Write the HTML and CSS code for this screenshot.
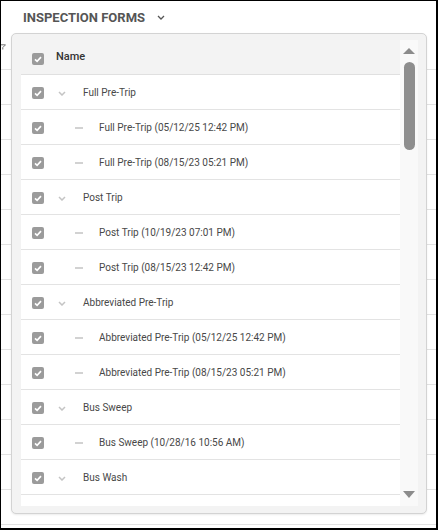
FILE: index.html
```html
<!DOCTYPE html>
<html>
<head>
<meta charset="utf-8">
<link rel="stylesheet" href="styles.css">
</head>
<body>
<div class="frame">
  <div class="title">
    <span class="title-text">INSPECTION FORMS</span>
    <svg class="title-chev" width="8" height="5" viewBox="0 0 8 5"><path d="M1 1 L4 4 L7 1" fill="none" stroke="#555" stroke-width="1.3"/></svg>
  </div>
  <div class="bg-head">
    <svg class="funnel" width="8" height="6" viewBox="0 0 8 6"><path d="M0.5 0.8 H7.5 L4.8 3.5 V5.5" fill="none" stroke="#777" stroke-width="1"/></svg>
  </div>

  <div class="panel">
    <div class="list">
      <div class="head">
        <svg class="cb cb-head" width="12" height="12" viewBox="0 0 12 12"><rect width="12" height="12" rx="2" fill="#9b9b9b"/><path d="M3 6.3 L5.1 8.3 L9 4.2" fill="none" stroke="#fff" stroke-width="1.7"/></svg>
        <span class="head-text">Name</span>
      </div>

      <div class="row">
        <svg class="cb" width="12" height="12" viewBox="0 0 12 12"><rect width="12" height="12" rx="2" fill="#9b9b9b"/><path d="M3 6.3 L5.1 8.3 L9 4.2" fill="none" stroke="#fff" stroke-width="1.7"/></svg>
        <svg class="chev" width="8" height="5" viewBox="0 0 8 5"><path d="M1 1 L4 4 L7 1" fill="none" stroke="#c4c4c4" stroke-width="1.5"/></svg>
        <span class="label">Full Pre-Trip</span>
      </div>
      <div class="row">
        <svg class="cb" width="12" height="12" viewBox="0 0 12 12"><rect width="12" height="12" rx="2" fill="#9b9b9b"/><path d="M3 6.3 L5.1 8.3 L9 4.2" fill="none" stroke="#fff" stroke-width="1.7"/></svg>
        <span class="dash"></span>
        <span class="label">Full Pre-Trip (05/12/25 12:42 PM)</span>
      </div>
      <div class="row">
        <svg class="cb" width="12" height="12" viewBox="0 0 12 12"><rect width="12" height="12" rx="2" fill="#9b9b9b"/><path d="M3 6.3 L5.1 8.3 L9 4.2" fill="none" stroke="#fff" stroke-width="1.7"/></svg>
        <span class="dash"></span>
        <span class="label">Full Pre-Trip (08/15/23 05:21 PM)</span>
      </div>
      <div class="row">
        <svg class="cb" width="12" height="12" viewBox="0 0 12 12"><rect width="12" height="12" rx="2" fill="#9b9b9b"/><path d="M3 6.3 L5.1 8.3 L9 4.2" fill="none" stroke="#fff" stroke-width="1.7"/></svg>
        <svg class="chev" width="8" height="5" viewBox="0 0 8 5"><path d="M1 1 L4 4 L7 1" fill="none" stroke="#c4c4c4" stroke-width="1.5"/></svg>
        <span class="label">Post Trip</span>
      </div>
      <div class="row">
        <svg class="cb" width="12" height="12" viewBox="0 0 12 12"><rect width="12" height="12" rx="2" fill="#9b9b9b"/><path d="M3 6.3 L5.1 8.3 L9 4.2" fill="none" stroke="#fff" stroke-width="1.7"/></svg>
        <span class="dash"></span>
        <span class="label">Post Trip (10/19/23 07:01 PM)</span>
      </div>
      <div class="row">
        <svg class="cb" width="12" height="12" viewBox="0 0 12 12"><rect width="12" height="12" rx="2" fill="#9b9b9b"/><path d="M3 6.3 L5.1 8.3 L9 4.2" fill="none" stroke="#fff" stroke-width="1.7"/></svg>
        <span class="dash"></span>
        <span class="label">Post Trip (08/15/23 12:42 PM)</span>
      </div>
      <div class="row">
        <svg class="cb" width="12" height="12" viewBox="0 0 12 12"><rect width="12" height="12" rx="2" fill="#9b9b9b"/><path d="M3 6.3 L5.1 8.3 L9 4.2" fill="none" stroke="#fff" stroke-width="1.7"/></svg>
        <svg class="chev" width="8" height="5" viewBox="0 0 8 5"><path d="M1 1 L4 4 L7 1" fill="none" stroke="#c4c4c4" stroke-width="1.5"/></svg>
        <span class="label">Abbreviated Pre-Trip</span>
      </div>
      <div class="row">
        <svg class="cb" width="12" height="12" viewBox="0 0 12 12"><rect width="12" height="12" rx="2" fill="#9b9b9b"/><path d="M3 6.3 L5.1 8.3 L9 4.2" fill="none" stroke="#fff" stroke-width="1.7"/></svg>
        <span class="dash"></span>
        <span class="label">Abbreviated Pre-Trip (05/12/25 12:42 PM)</span>
      </div>
      <div class="row">
        <svg class="cb" width="12" height="12" viewBox="0 0 12 12"><rect width="12" height="12" rx="2" fill="#9b9b9b"/><path d="M3 6.3 L5.1 8.3 L9 4.2" fill="none" stroke="#fff" stroke-width="1.7"/></svg>
        <span class="dash"></span>
        <span class="label">Abbreviated Pre-Trip (08/15/23 05:21 PM)</span>
      </div>
      <div class="row">
        <svg class="cb" width="12" height="12" viewBox="0 0 12 12"><rect width="12" height="12" rx="2" fill="#9b9b9b"/><path d="M3 6.3 L5.1 8.3 L9 4.2" fill="none" stroke="#fff" stroke-width="1.7"/></svg>
        <svg class="chev" width="8" height="5" viewBox="0 0 8 5"><path d="M1 1 L4 4 L7 1" fill="none" stroke="#c4c4c4" stroke-width="1.5"/></svg>
        <span class="label">Bus Sweep</span>
      </div>
      <div class="row">
        <svg class="cb" width="12" height="12" viewBox="0 0 12 12"><rect width="12" height="12" rx="2" fill="#9b9b9b"/><path d="M3 6.3 L5.1 8.3 L9 4.2" fill="none" stroke="#fff" stroke-width="1.7"/></svg>
        <span class="dash"></span>
        <span class="label">Bus Sweep (10/28/16 10:56 AM)</span>
      </div>
      <div class="row">
        <svg class="cb" width="12" height="12" viewBox="0 0 12 12"><rect width="12" height="12" rx="2" fill="#9b9b9b"/><path d="M3 6.3 L5.1 8.3 L9 4.2" fill="none" stroke="#fff" stroke-width="1.7"/></svg>
        <svg class="chev" width="8" height="5" viewBox="0 0 8 5"><path d="M1 1 L4 4 L7 1" fill="none" stroke="#c4c4c4" stroke-width="1.5"/></svg>
        <span class="label">Bus Wash</span>
      </div>
      <div class="row"></div>
    </div>
    <div class="scrollbar">
      <span class="arrow-up"></span>
      <span class="thumb"></span>
      <span class="spacer"></span>
      <span class="arrow-down"></span>
    </div>
  </div>
</div>
</body>
</html>
```

FILE: styles.css
```css
* { box-sizing: border-box; }
html, body { margin: 0; padding: 0; background: #fff; }
body { font-family: Roboto, "Liberation Sans", sans-serif; }

.frame {
  position: relative;
  width: 438px;
  height: 530px;
  border-top: 1px solid #000;
  border-left: 1px solid #000;
  border-right: 2px solid #000;
  border-bottom: 2px solid #000;
  background: repeating-linear-gradient(to bottom, transparent 0 34px, #e2e2e2 34px 35px) 0 34px / 100% 500px no-repeat;
  overflow: hidden;
}

.title {
  display: flex;
  align-items: center;
  padding: 8px 0 0 22px;
  height: 24px;
}
.title-text {
  font-size: 13px;
  line-height: 15px;
  font-weight: 700;
  color: #555;
}
.title-chev { margin-left: 12px; margin-top: 1px; }

.bg-head {
  display: flex;
  margin-top: 19px;
  margin-left: -3px;
}
.funnel { display: block; }

.panel {
  position: absolute;
  left: 10px;
  top: 32px;
  width: 416px;
  height: 481px;
  border: 1px solid #d3d3d3;
  border-radius: 5px;
  background: #f3f3f3;
  box-shadow: 0 1px 2px rgba(0,0,0,0.08);
  padding: 6px 7px 7px 9px;
  display: flex;
}

.list {
  width: 379px;
  height: 100%;
  overflow: hidden;
  display: flex;
  flex-direction: column;
}

.head {
  flex: none;
  height: 35px;
  border-bottom: 1px solid #e0e0e0;
  display: flex;
  align-items: flex-start;
  padding-left: 11px;
}
.cb { display: block; flex: none; }
.cb-head { margin-top: 13px; }
.head-text {
  margin-left: 12px;
  margin-top: 10px;
  font-size: 11px;
  line-height: 13px;
  font-weight: 500;
  color: #333;
}

.row {
  flex: none;
  height: 35px;
  background: #fff;
  border-bottom: 1px solid #e3e3e3;
  display: flex;
  align-items: center;
  padding-left: 11px;
}
.row .cb { margin-top: 2px; }
.chev { display: block; flex: none; margin-left: 14px; margin-right: 17px; margin-top: 2px; }
.dash {
  display: block;
  flex: none;
  width: 8px;
  height: 2px;
  background: #d2d2d2;
  margin-left: 31px;
  margin-right: 16px;
  margin-top: 1px;
}
.label {
  font-size: 10px;
  line-height: 12px;
  color: #484848;
  white-space: nowrap;
  margin-top: 2px;
}

.scrollbar {
  width: 18px;
  height: 100%;
  background: #f9f9f9;
  display: flex;
  flex-direction: column;
  align-items: center;
}
.arrow-up {
  display: block;
  margin-top: 8px;
  width: 0; height: 0;
  border-left: 6px solid transparent;
  border-right: 6px solid transparent;
  border-bottom: 6px solid #8c8c8c;
}
.thumb {
  display: block;
  margin-top: 8px;
  width: 11px;
  height: 88px;
  border-radius: 6px;
  background: #8e8e8e;
}
.spacer { flex: 1; }
.arrow-down {
  display: block;
  margin-bottom: 8px;
  width: 0; height: 0;
  border-left: 6px solid transparent;
  border-right: 6px solid transparent;
  border-top: 7px solid #8c8c8c;
}
```
